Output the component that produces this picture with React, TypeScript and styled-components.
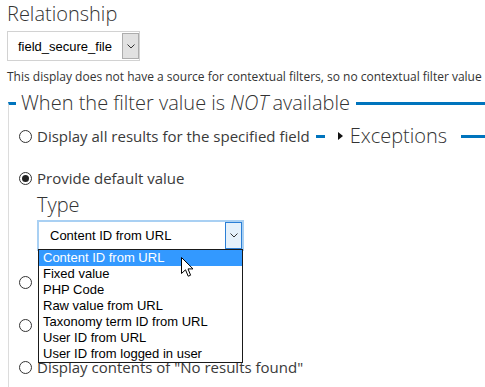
import React from "react";
import styled, { createGlobalStyle } from "styled-components";

const GlobalStyle = createGlobalStyle`
  html, body { margin: 0; padding: 0; background: #fff; overflow: hidden; }
  body { font-family: "Open Sans", "Noto Sans", sans-serif; color: #333; }
`;

const Page = styled.div`
  width: 485px;
  height: 387px;
  overflow: hidden;
  box-sizing: border-box;
  padding: 1px 0 0 7px;
`;

const Heading = styled.div<{ $mt?: number }>`
  font-size: 20px;
  font-weight: 300;
  line-height: 26px;
  color: #333;
  margin-top: ${(p) => p.$mt ?? 0}px;
  white-space: nowrap;
`;

const SelectBox = styled.div<{ $width: number; $focused?: boolean; $mt?: number }>`
  position: relative;
  box-sizing: border-box;
  width: ${(p) => p.$width}px;
  height: ${(p) => (p.$focused ? 31 : 30)}px;
  margin-top: ${(p) => p.$mt ?? 0}px;
  display: flex;
  align-items: stretch;
  background: #fff;
  border: ${(p) => (p.$focused ? "2px solid #a9d0f3" : "1px solid #d2d2d2")};
  font-family: "Liberation Sans", Arial, sans-serif;
  font-size: 13px;
  color: #000;
`;

const SelectText = styled.span<{ $pad: number }>`
  flex: 1;
  display: flex;
  align-items: center;
  padding-left: ${(p) => p.$pad}px;
  white-space: nowrap;
`;

const ArrowBox = styled.span<{ $focused?: boolean }>`
  box-sizing: border-box;
  width: 17px;
  margin: ${(p) => (p.$focused ? "0" : "1px 0 1px 0")};
  display: flex;
  align-items: center;
  justify-content: center;
  border: 1px solid ${(p) => (p.$focused ? "#2b7fd6" : "#adadad")};
  background: ${(p) => (p.$focused ? "#e5f1fb" : "#e1e1e1")};
`;

const Description = styled.div`
  margin-top: 7px;
  font-size: 12px;
  line-height: 18px;
  color: #333;
  white-space: nowrap;
`;

const Group = styled.fieldset`
  margin: 4px 0 0 1px;
  padding: 0;
  min-width: 0;
  border: 0;
  border-top: 3px solid #0074bd;
  border-left: 1px solid #dcdcdc;
  width: 477px;
  box-sizing: border-box;
`;

const GroupLegend = styled.legend`
  margin-left: 7px;
  padding: 0 6px 0 5px;
  font-size: 20px;
  font-weight: 300;
  line-height: 26px;
  color: #333;
  white-space: nowrap;
  em {
    font-style: italic;
    margin-right: -1px;
  }
`;

const GroupBody = styled.div`
  padding: 8px 0 40px 10px;
`;

const OptionRow = styled.div<{ $mt?: number }>`
  display: flex;
  align-items: center;
  height: 24px;
  margin-top: ${(p) => p.$mt ?? 0}px;
`;

const RadioLabel = styled.label`
  display: flex;
  align-items: center;
  gap: 5px;
  font-size: 15px;
  line-height: 24px;
  color: #3a3a3a;
  white-space: nowrap;
`;

const Radio = styled.span<{ $checked?: boolean }>`
  box-sizing: border-box;
  width: 13px;
  height: 13px;
  border-radius: 50%;
  border: 1px solid #333;
  background: #fff;
  display: flex;
  align-items: center;
  justify-content: center;
  flex: none;
  &::after {
    content: "";
    display: ${(p) => (p.$checked ? "block" : "none")};
    width: 7px;
    height: 7px;
    border-radius: 50%;
    background: #222;
  }
`;

const Collapsed = styled.fieldset`
  flex: 1;
  min-width: 0;
  margin: 0 0 0 6px;
  padding: 0;
  border: 0;
  border-top: 3px solid #0074bd;
`;

const CollapsedLegend = styled.legend`
  margin-left: 9px;
  padding: 0 14px 0 13px;
  font-size: 20px;
  font-weight: 300;
  line-height: 26px;
  color: #333;
  white-space: nowrap;
  display: flex;
  align-items: center;
`;

const Triangle = styled.span`
  width: 0;
  height: 0;
  border-top: 4px solid transparent;
  border-bottom: 4px solid transparent;
  border-left: 5px solid #111;
  margin-right: 7px;
`;

const SubField = styled.div`
  margin: 2px 0 0 18px;
`;

const DropList = styled.ul`
  position: absolute;
  top: 100%;
  left: -1px;
  width: 205px;
  margin: 0;
  padding: 0;
  list-style: none;
  box-sizing: border-box;
  border: 1px solid #1a1a1a;
  background: #fff;
  z-index: 5;
`;

const DropItem = styled.li<{ $active?: boolean }>`
  height: 16px;
  line-height: 16px;
  padding-left: 4px;
  white-space: nowrap;
  background: ${(p) => (p.$active ? "#3399ff" : "#fff")};
  color: ${(p) => (p.$active ? "#fff" : "#000")};
`;

const Cursor = styled.svg`
  position: absolute;
  left: 142px;
  top: 7px;
  z-index: 6;
`;

const Chevron = () => (
  <svg width="8" height="5" viewBox="0 0 8 5">
    <polyline points="0.5,0.5 4,4 7.5,0.5" fill="none" stroke="#333" strokeWidth="1" />
  </svg>
);

const options = [
  "Content ID from URL",
  "Fixed value",
  "PHP Code",
  "Raw value from URL",
  "Taxonomy term ID from URL",
  "User ID from URL",
  "User ID from logged in user",
];

export default function App() {
  return (
    <>
      <GlobalStyle />
      <Page>
        <Heading>Relationship</Heading>
        <SelectBox $width={133} $mt={4}>
          <SelectText $pad={10}>field_secure_file</SelectText>
          <ArrowBox>
            <Chevron />
          </ArrowBox>
        </SelectBox>
        <Description>
          This display does not have a source for contextual filters, so no contextual filter value is available.
        </Description>
        <Group>
          <GroupLegend>
            When the filter value is <em>NOT</em> available
          </GroupLegend>
          <GroupBody>
            <OptionRow>
              <RadioLabel>
                <Radio />
                Display all results for the specified field
              </RadioLabel>
              <Collapsed>
                <CollapsedLegend>
                  <Triangle />
                  Exceptions
                </CollapsedLegend>
              </Collapsed>
            </OptionRow>
            <OptionRow $mt={18}>
              <RadioLabel>
                <Radio $checked />
                Provide default value
              </RadioLabel>
            </OptionRow>
            <SubField>
              <Heading>Type</Heading>
              <SelectBox $width={207} $focused $mt={2}>
                <SelectText $pad={11}>Content ID from URL</SelectText>
                <ArrowBox $focused>
                  <Chevron />
                </ArrowBox>
                <DropList>
                  {options.map((o, i) => (
                    <DropItem key={o} $active={i === 0}>
                      {o}
                    </DropItem>
                  ))}
                  <Cursor width="13" height="21" viewBox="0 0 13 21">
                    <path
                      d="M0.5,0.5 L0.5,16.5 L4.5,12.8 L7.2,19.2 L9.6,18.2 L7,11.9 L12,11.9 Z"
                      fill="#fff"
                      stroke="#000"
                      strokeWidth="1"
                      strokeLinejoin="miter"
                    />
                  </Cursor>
                </DropList>
              </SelectBox>
            </SubField>
            <OptionRow $mt={19}>
              <RadioLabel>
                <Radio />
                Hide view
              </RadioLabel>
            </OptionRow>
            <OptionRow $mt={19}>
              <RadioLabel>
                <Radio />
                Display a summary
              </RadioLabel>
            </OptionRow>
            <OptionRow $mt={18}>
              <RadioLabel>
                <Radio />
                Display contents of "No results found"
              </RadioLabel>
            </OptionRow>
          </GroupBody>
        </Group>
      </Page>
    </>
  );
}
